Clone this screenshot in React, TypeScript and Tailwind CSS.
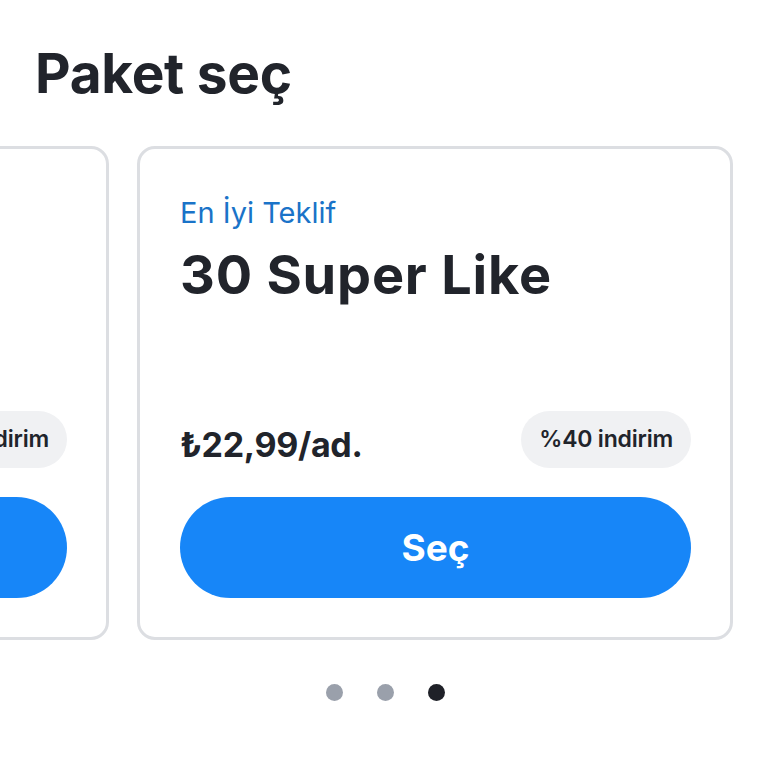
import React from "react";

type Pack = {
  tag?: string;
  title: string;
  price: string;
  discount: string;
};

const packs: Pack[] = [
  { tag: "Popüler", title: "15 Super Like", price: "₺26,99/ad.", discount: "%30 indirim" },
  { tag: "En İyi Teklif", title: "30 Super Like", price: "₺22,99/ad.", discount: "%40 indirim" },
];

function PackCard({ pack }: { pack: Pack }) {
  return (
    <div className="shrink-0 w-[596px] h-[494px] rounded-[18px] border-[3px] border-[#dcdee2] bg-white flex flex-col justify-between pl-[40px] pr-[39px] pt-[46px] pb-[39px]">
      <div>
        {pack.tag && <p className="text-[29px] leading-[36px] text-[#1a73c8]">{pack.tag}</p>}
        <h2 className="mt-[16px] text-[54px] leading-[56px] font-bold text-[#21242b] tracking-[0.8px]">
          {pack.title}
        </h2>
      </div>
      <div>
        <div className="flex items-center justify-between">
          <span className="text-[34px] font-bold text-[#21242b] mt-[10px] tracking-[-0.3px]">{pack.price}</span>
          <span className="h-[57px] px-[18px] rounded-full bg-[#f0f1f3] flex items-center text-[23px] font-semibold text-[#21242b] tracking-[-0.2px]">
            {pack.discount}
          </span>
        </div>
        <button className="mt-[27px] w-full h-[101px] rounded-full bg-[#1786f8] text-white text-[37px] font-bold">
          Seç
        </button>
      </div>
    </div>
  );
}

export default function App() {
  return (
    <div className="w-[768px] h-[768px] bg-white overflow-hidden" style={{ fontFamily: "Inter, 'Noto Sans', sans-serif" }}>
      <h1 className="pl-[35px] pt-[38px] text-[55px] leading-[70px] font-bold text-[#21242b] tracking-[-0.3px]">
        Paket seç
      </h1>
      <div className="mt-[38px] flex gap-[28px] ml-[-487px]">
        {packs.map((p) => (
          <PackCard key={p.title} pack={p} />
        ))}
      </div>
      <div className="mt-[44px] flex justify-center gap-[34px] pl-[2px]">
        <span className="w-[17px] h-[17px] rounded-full bg-[#9aa0ab]" />
        <span className="w-[17px] h-[17px] rounded-full bg-[#9aa0ab]" />
        <span className="w-[17px] h-[17px] rounded-full bg-[#1f2128]" />
      </div>
    </div>
  );
}
